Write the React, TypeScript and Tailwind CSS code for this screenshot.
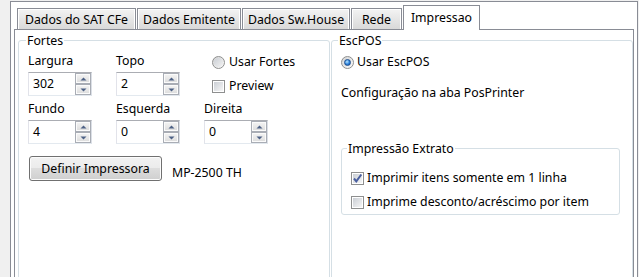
import React from "react";

function Arrow({ up }: { up?: boolean }) {
  return (
    <svg width="7" height="4" viewBox="0 0 7 4" className="block">
      {up ? (
        <path d="M0.5 3.5 L3.5 0.5 L6.5 3.5 Z" fill="#4d6185" />
      ) : (
        <path d="M0.5 0.5 L3.5 3.5 L6.5 0.5 Z" fill="#4d6185" />
      )}
    </svg>
  );
}

function SpinBtn({ up }: { up?: boolean }) {
  return (
    <div className="flex h-[11px] w-[16px] items-center justify-center border border-[#a9adb5] bg-linear-to-b from-[#f4f4f4] to-[#dcdcdc] shadow-[inset_0_0_0_1px_#fbfbfb]">
      <Arrow up={up} />
    </div>
  );
}

function Spin({ value }: { value: string }) {
  return (
    <div className="flex h-[24px] w-[64px] border border-[#abadb3] border-l-[#e2e3ea] border-r-[#dbdfe6] border-b-[#e3e9ef] bg-white">
      <div className="flex-1 pl-[4px] leading-[22px]">{value}</div>
      <div className="flex flex-col">
        <SpinBtn up />
        <SpinBtn />
      </div>
    </div>
  );
}

function Radio({ checked }: { checked?: boolean }) {
  return (
    <span className="flex h-[13px] w-[13px] shrink-0 items-center justify-center rounded-full border border-[#8e8f8f] bg-linear-to-br from-[#d4d4d4] to-[#fbfbfb]">
      {checked ? (
        <span className="h-[7px] w-[7px] rounded-full border border-[#1d4f91] bg-[radial-gradient(circle_at_40%_35%,#b9e6ff,#2c83dd_55%,#0f4a9c)]" />
      ) : (
        <span className="h-[9px] w-[9px] rounded-full bg-linear-to-br from-[#cbcfd5] to-[#f2f2f2]" />
      )}
    </span>
  );
}

function Check({ checked }: { checked?: boolean }) {
  return (
    <span className="relative flex h-[13px] w-[13px] shrink-0 items-center justify-center border border-[#8e8f8f] bg-white">
      <span className="h-[9px] w-[9px] bg-linear-to-br from-[#cbcfd5] to-[#f6f6f6]" />
      {checked && (
        <svg width="11" height="11" viewBox="0 0 11 11" className="absolute left-[0px] top-[0px]">
          <path d="M2 5.5 L4.3 8.3 L9.3 1.5" stroke="#4a5f9f" strokeWidth="2" fill="none" />
        </svg>
      )}
    </span>
  );
}

function Legend({ children, left }: { children: React.ReactNode; left: string }) {
  return (
    <span className={`absolute -top-[8px] ${left} bg-white px-[1px] leading-[16px]`}>{children}</span>
  );
}

export default function App() {
  return (
    <div className="h-[277px] w-[639px] overflow-hidden bg-[#f0f0f0] pl-[10px] pt-[1px] font-['Noto_Sans',sans-serif] text-[12.3px] text-black">
      <div className="h-[300px] w-[628px] border-l border-r border-t border-[#898c95] bg-white px-[3px] pt-[3px]">
        {/* tab strip */}
        <div className="flex items-end gap-px pl-[3px]">
          <div className="flex h-[21px] w-[119px] items-center justify-center border border-b-0 border-[#898c95] bg-linear-to-b from-[#f3f3f3] to-[#d9d9d9] pt-[2px] leading-[16px] shadow-[inset_1px_1px_0_#ffffff,inset_-1px_0_0_#ffffff]">
            Dados do SAT CFe
          </div>
          <div className="flex h-[21px] w-[104px] items-center justify-center border border-b-0 border-[#898c95] bg-linear-to-b from-[#f3f3f3] to-[#d9d9d9] pt-[2px] leading-[16px] shadow-[inset_1px_1px_0_#ffffff,inset_-1px_0_0_#ffffff]">
            Dados Emitente
          </div>
          <div className="flex h-[21px] w-[108px] items-center justify-center border border-b-0 border-[#898c95] bg-linear-to-b from-[#f3f3f3] to-[#d9d9d9] pt-[2px] leading-[16px] shadow-[inset_1px_1px_0_#ffffff,inset_-1px_0_0_#ffffff]">
            Dados Sw.House
          </div>
          <div className="flex h-[21px] w-[51px] items-center justify-center border border-b-0 border-[#898c95] bg-linear-to-b from-[#f3f3f3] to-[#d9d9d9] pt-[2px] leading-[16px] shadow-[inset_1px_1px_0_#ffffff,inset_-1px_0_0_#ffffff]">
            Rede
          </div>
          <div className="relative z-10 -mb-px flex h-[25px] w-[77px] items-center justify-center border border-b-0 border-[#898c95] bg-white leading-[16px]">
            Impressao
          </div>
        </div>
        {/* page */}
        <div className="flex h-[260px] gap-px border-l border-r border-t border-[#898c95] bg-white pl-[3px] pt-[10px]">
          {/* Fortes */}
          <div className="relative h-[260px] w-[312px] rounded-[3px] border border-[#d5dfe5]">
            <Legend left="left-[7px]">Fortes</Legend>
            <div className="flex pl-[9px] pt-[12px]">
              <div className="w-[88px]">
                <div className="leading-[16px]">Largura</div>
                <div className="mt-[3px]">
                  <Spin value="302" />
                </div>
              </div>
              <div className="w-[88px]">
                <div className="leading-[16px]">Topo</div>
                <div className="mt-[3px]">
                  <Spin value="2" />
                </div>
              </div>
              <div className="ml-[8px] pt-[1px]">
                <div className="flex h-[16px] items-center gap-[4px]">
                  <Radio />
                  <span className="leading-[16px]">Usar Fortes</span>
                </div>
                <div className="mt-[8px] flex h-[16px] items-center gap-[4px]">
                  <Check />
                  <span className="leading-[16px]">Preview</span>
                </div>
              </div>
            </div>
            <div className="mt-[5px] flex pl-[9px]">
              <div className="w-[88px]">
                <div className="leading-[16px]">Fundo</div>
                <div className="mt-[3px]">
                  <Spin value="4" />
                </div>
              </div>
              <div className="w-[88px]">
                <div className="leading-[16px]">Esquerda</div>
                <div className="mt-[3px]">
                  <Spin value="0" />
                </div>
              </div>
              <div className="w-[88px]">
                <div className="leading-[16px]">Direita</div>
                <div className="mt-[3px]">
                  <Spin value="0" />
                </div>
              </div>
            </div>
            <div className="mt-[12px] flex items-center pl-[10px]">
              <button className="h-[25px] w-[133px] rounded-[3px] border border-[#707070] bg-[linear-gradient(#f2f2f2_0%,#ebebeb_49%,#dddddd_50%,#cfcfcf_100%)] leading-[16px] shadow-[inset_0_0_0_1px_#fcfcfc]">
                Definir Impressora
              </button>
              <span className="ml-[10px] pt-[8px] leading-[16px]">MP-2500 TH</span>
            </div>
          </div>
          {/* EscPOS */}
          <div className="relative h-[260px] w-[302px] rounded-[3px] border border-[#d5dfe5]">
            <Legend left="left-[6px]">EscPOS</Legend>
            <div className="pl-[9px] pt-[13px]">
              <div className="flex h-[16px] items-center gap-[3px]">
                <Radio checked />
                <span className="leading-[16px]">Usar EscPOS</span>
              </div>
              <div className="mt-[15px] leading-[16px]">Configuração na aba PosPrinter</div>
              <div className="relative mt-[47px] h-[67px] w-[279px] rounded-[3px] border border-[#d5dfe5]">
                <Legend left="left-[5px]">Impressão Extrato</Legend>
                <div className="pl-[9px] pt-[21px]">
                  <div className="flex h-[16px] items-center gap-[3px]">
                    <Check checked />
                    <span className="leading-[16px]">Imprimir itens somente em 1 linha</span>
                  </div>
                  <div className="mt-[8px] flex h-[16px] items-center gap-[3px]">
                    <Check />
                    <span className="leading-[16px]">Imprime desconto/acréscimo por item</span>
                  </div>
                </div>
              </div>
            </div>
          </div>
        </div>
      </div>
    </div>
  );
}
